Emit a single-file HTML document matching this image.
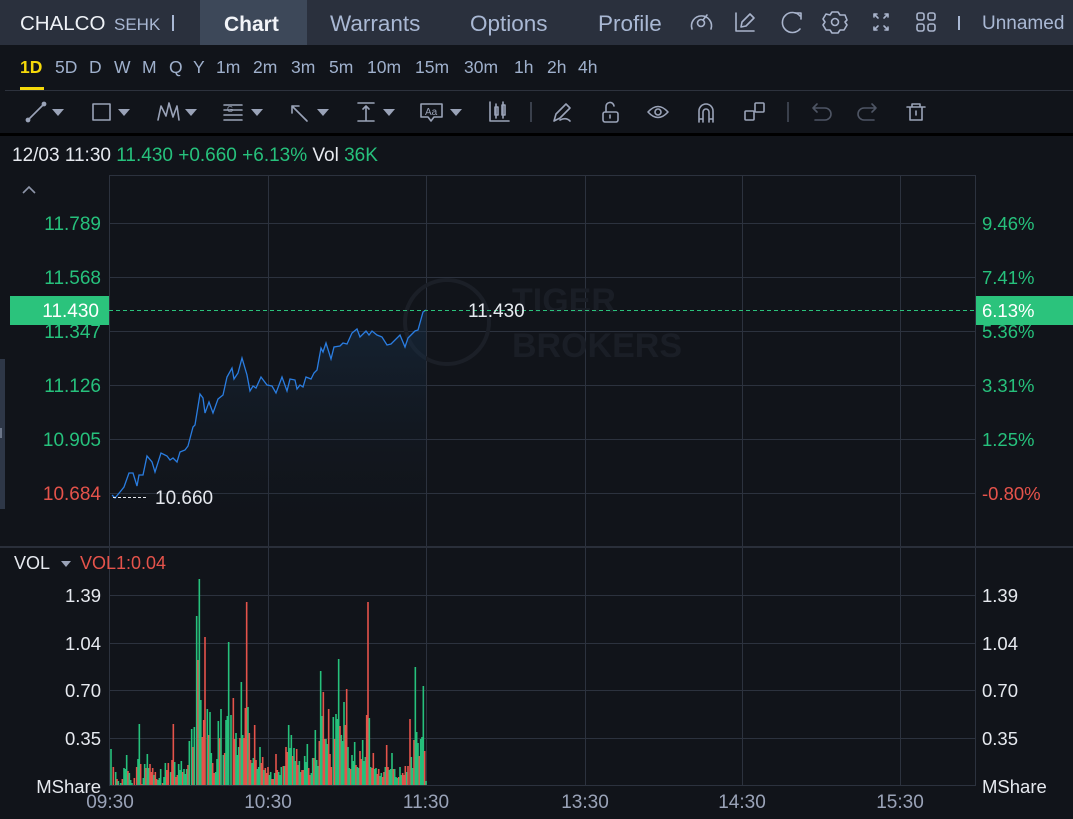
<!DOCTYPE html>
<html><head><meta charset="utf-8">
<style>
html,body{margin:0;padding:0;background:#11141a;width:1073px;height:819px;overflow:hidden;font-family:"Liberation Sans",sans-serif}
svg{display:block}
text{font-family:"Liberation Sans",sans-serif}
</style></head>
<body>
<svg width="1073" height="819" viewBox="0 0 1073 819" xmlns="http://www.w3.org/2000/svg">
<rect width="1073" height="819" fill="#11141a"/>
<!-- top bar -->
<rect x="0" y="0" width="1073" height="45" fill="#2a303d"/>
<rect x="200" y="0" width="107" height="45" fill="#3d4859"/>
<text x="20" y="30" font-size="20.5" fill="#eef1f6">CHALCO</text>
<text x="114" y="30" font-size="17" fill="#a9b8d4">SEHK</text>
<rect x="172" y="15" width="2" height="16" fill="#a9b8d4"/>
<text x="224" y="31" font-size="21" font-weight="bold" fill="#f2f4f8">Chart</text>
<text x="330" y="31" font-size="22.5" fill="#a9b8d4">Warrants</text>
<text x="470" y="31" font-size="22.5" fill="#a9b8d4">Options</text>
<text x="598" y="31" font-size="22.5" fill="#a9b8d4">Profile</text>
<g fill="none" stroke="#a9b4cc" stroke-width="1.6" stroke-linecap="round" stroke-linejoin="round">
 <path d="M692 29 A10 10 0 1 1 711 29"/><circle cx="701" cy="23" r="3.5"/><path d="M703 20 L707 15"/>
 <path d="M736 13 V31 H754"/><path d="M741 27 L742 22 L750 14 L754 18 L746 26 Z"/>
 <path d="M800 16 A10 10 0 1 0 800 29"/><path d="M795 13 H801 V19"/>
 <circle cx="835" cy="22" r="3.5"/><path d="M832 12 H838 L840 15 L845 15 L847 20 L845 22 L847 25 L844 30 L840 30 L838 33 H832 L830 30 L826 30 L823 25 L825 22 L823 19 L826 14 L830 15 Z"/>
 <path d="M874 14 L878 18 M874 14 V17 M874 14 H877 M888 14 L884 18 M888 14 V17 M888 14 H885 M874 30 L878 26 M874 30 V27 M874 30 H877 M888 30 L884 26 M888 30 V27 M888 30 H885"/>
 <rect x="917" y="13" width="7" height="7" rx="2"/><rect x="928" y="13" width="7" height="7" rx="2"/><rect x="917" y="24" width="7" height="7" rx="2"/><rect x="928" y="24" width="7" height="7" rx="2"/>
</g>
<rect x="958" y="16" width="2" height="14" fill="#a9b8d4"/>
<text x="982" y="29" font-size="19" fill="#a9b8d4">Unnamed</text>

<!-- timeframes -->
<g font-size="17.5" fill="#9fb0cc">
<text x="20" y="73" fill="#f5d90a" font-weight="bold">1D</text>
<text x="55" y="73">5D</text><text x="89" y="73">D</text><text x="114" y="73">W</text><text x="142" y="73">M</text><text x="169" y="73">Q</text><text x="193" y="73">Y</text>
<text x="216" y="73">1m</text><text x="253" y="73">2m</text><text x="291" y="73">3m</text><text x="329" y="73">5m</text><text x="367" y="73">10m</text><text x="415" y="73">15m</text><text x="464" y="73">30m</text><text x="514" y="73">1h</text><text x="547" y="73">2h</text><text x="578" y="73">4h</text>
</g>
<rect x="20" y="87" width="24" height="3" fill="#f5d90a"/>
<rect x="5" y="90" width="1068" height="1" fill="#2d323d"/>

<!-- toolbar -->
<g fill="none" stroke="#9aa3b8" stroke-width="1.6" stroke-linecap="round" stroke-linejoin="round">
 <path d="M28 120 L44 104"/><circle cx="28" cy="120" r="1.6" fill="#9aa3b8"/><circle cx="44" cy="104" r="1.6" fill="#9aa3b8"/>
 <rect x="93" y="104" width="17" height="16"/>
 <path d="M158 120 L161 106 L166 116 L169 103 L173 117 L177 106 L179 120"/>
 <path d="M224 105 H242 M224 110 H242 M224 115 H242 M224 120 H242"/>
 <path d="M307 121 L292 106 M292 106 V113 M292 106 H299"/>
 <path d="M358 103 H374 M358 121 H374 M366 106 V121 M363 109 L366 106 L369 109"/>
 <path d="M421 104 H442 V117 H434 L431 121 L428 117 H421 Z"/>
 <path d="M490 102 V121 H509"/><rect x="495" y="107" width="3" height="8"/><rect x="502" y="105" width="3" height="10"/><path d="M496 104V118 M503 102V118"/>
 <path d="M554 121 L556 114 L566 104 L570 108 L560 118 Z M560 120 Q566 117 570 121"/>
 <rect x="603" y="112" width="15" height="10" rx="2"/><path d="M606 112 V107 A4 4 0 0 1 614 106"/><path d="M610 115 V118"/>
 <path d="M648 112 Q658 101 668 112 Q658 123 648 112 Z"/><circle cx="658" cy="112" r="3"/>
 <path d="M699 122 V111 A7 7 0 0 1 713 111 V122 M703 122 V112 A3 3 0 0 1 709 112 V122 M699 119 H703 M709 119 H713"/>
 <rect x="745" y="111" width="9" height="9" rx="1"/><rect x="755" y="103" width="9" height="9" rx="1"/>
</g>
<g fill="#9aa3b8">
 <path d="M52 109 H64 L58 116 Z"/><path d="M118 109 H130 L124 116 Z"/><path d="M185 109 H197 L191 116 Z"/><path d="M251 109 H263 L257 116 Z"/><path d="M317 109 H329 L323 116 Z"/><path d="M383 109 H395 L389 116 Z"/><path d="M450 109 H462 L456 116 Z"/>
</g>
<text x="227" y="112" font-size="8" fill="#9aa3b8">G</text>
<text x="425" y="115" font-size="10" fill="#9aa3b8">Aa</text>
<rect x="530" y="102" width="2" height="20" fill="#3a404c"/>
<rect x="787" y="102" width="2" height="20" fill="#3a404c"/>
<g fill="none" stroke="#4e5564" stroke-width="1.6" stroke-linecap="round" stroke-linejoin="round">
 <path d="M813 108 H825 A6 6 0 0 1 825 120 H815 M813 108 L817 104 M813 108 L817 112"/>
 <path d="M876 108 H864 A6 6 0 0 0 864 120 H874 M876 108 L872 104 M876 108 L872 112"/>
</g>
<g fill="none" stroke="#9aa3b8" stroke-width="1.6" stroke-linecap="round" stroke-linejoin="round">
 <path d="M907 107 H925 M912 107 V104 H920 V107 M910 107 V120 H922 V107 M916 111 V115"/>
</g>
<rect x="0" y="133" width="1073" height="3" fill="#000"/>

<!-- info line -->
<text x="12" y="161" font-size="19"><tspan fill="#e6e9ef">12/03 11:30 </tspan><tspan fill="#26c17c">11.430 +0.660 +6.13% </tspan><tspan fill="#e6e9ef">Vol </tspan><tspan fill="#26c17c">36K</tspan></text>

<!-- left bar -->
<rect x="0" y="359" width="5" height="150" fill="#2e3747"/>
<rect x="0" y="428" width="2" height="10" fill="#6b7588"/>

<!-- chevron -->
<path d="M23 193 L29 187 L35 193" fill="none" stroke="#8e96aa" stroke-width="1.6"/>

<!-- grid -->
<g stroke="#2c323e" stroke-width="1">
 <path d="M109.5 175 V785 M975.5 175 V785 M109 175.5 H976"/>
 <path d="M268.5 175 V785 M426.5 175 V785 M585.5 175 V785 M742.5 175 V785 M900.5 175 V785"/>
 <path d="M109 223.5 H976 M109 277.5 H976 M109 331.5 H976 M109 385.5 H976 M109 439.5 H976 M109 493.5 H976"/>
 <path d="M109 595.5 H976 M109 643.5 H976 M109 690.5 H976 M109 738.5 H976 M109 785.5 H976"/>
</g>
<rect x="0" y="546" width="1073" height="2" fill="#2a2f3a"/>

<!-- watermark -->
<g>
<circle cx="447" cy="322" r="42" fill="none" stroke="#1b1f27" stroke-width="4"/>
<text x="512" y="312" font-size="34" font-weight="bold" fill="#1a1e26">TIGER</text>
<text x="512" y="357" font-size="34" font-weight="bold" fill="#1a1e26">BROKERS</text>
</g>

<!-- area + price line -->
<defs><linearGradient id="ag" x1="0" y1="0" x2="0" y2="1"><stop offset="0" stop-color="#1a3550" stop-opacity="0.5"/><stop offset="1" stop-color="#11141a" stop-opacity="0"/></linearGradient></defs>
<path id="area" fill="url(#ag)" d=""/>
<polyline id="pl" fill="none" stroke="#2a7de1" stroke-width="1.3" points="112,495 115,498 120,492 124,487 129,473 133,473 137,486 139,475 143,475 147,456 152,462 155,472 161,453 167,456 170,460 173,458 177,462 180,452 185,450 188,446 193,427 195,425 200,394 203,398 205,413 209,402 213,413 218,399 223,395 227,377 232,368 234,379 238,373 242,358 247,375 250,391 253,386 256,388 261,377 267,385 272,386 276,393 282,377 287,391 290,379 295,380 297,389 300,385 303,387 306,377 311,379 314,373 317,370 321,348 323,352 326,343 331,359 334,347 340,346 343,343 347,344 352,333 357,329 360,337 366,331 369,335 372,331 377,335 382,337 387,345 391,344 400,335 405,347 408,338 415,331 418,330 423,312 426,310"/>

<!-- current price dashed line -->
<path d="M109 310.5 H976" stroke="#2bc37c" stroke-width="1" stroke-dasharray="4,3"/>
<rect x="10" y="296" width="99" height="29" fill="#2bc37c"/>
<rect x="976" y="296" width="97" height="29" fill="#2bc37c"/>
<path d="M113 497.5 H148" stroke="#e6e9ef" stroke-width="1" stroke-dasharray="3,2"/>
<text x="468" y="317" font-size="19" fill="#e6e9ef">11.430</text>
<text x="155" y="504" font-size="19" fill="#e6e9ef">10.660</text>

<!-- left axis -->
<g font-size="19" text-anchor="end">
<text x="101" y="230" fill="#26c17c">11.789</text>
<text x="101" y="284" fill="#26c17c">11.568</text>
<text x="101" y="338" fill="#26c17c">11.347</text>
<text x="101" y="392" fill="#26c17c">11.126</text>
<text x="101" y="446" fill="#26c17c">10.905</text>
<text x="101" y="500" fill="#e5534b">10.684</text>
<text x="99" y="317" fill="#ffffff">11.430</text>
</g>
<g font-size="18.5">
<text x="982" y="230" fill="#26c17c">9.46%</text>
<text x="982" y="284" fill="#26c17c">7.41%</text>
<text x="982" y="338" fill="#26c17c">5.36%</text>
<text x="982" y="392" fill="#26c17c">3.31%</text>
<text x="982" y="446" fill="#26c17c">1.25%</text>
<text x="982" y="500" fill="#e5534b">-0.80%</text>
<text x="982" y="317" fill="#ffffff">6.13%</text>
</g>

<!-- volume -->
<text x="14" y="569" font-size="18" fill="#e6e9ef">VOL</text>
<path d="M61 561 H71 L66 567 Z" fill="#9aa3b8"/>
<text x="80" y="569" font-size="18" fill="#e5534b">VOL1:0.04</text>
<g font-size="18.5" fill="#e6e9ef">
<text x="101" y="602" text-anchor="end">1.39</text>
<text x="101" y="650" text-anchor="end">1.04</text>
<text x="101" y="697" text-anchor="end">0.70</text>
<text x="101" y="745" text-anchor="end">0.35</text>
<text x="101" y="793" text-anchor="end">MShare</text>
<text x="982" y="602">1.39</text>
<text x="982" y="650">1.04</text>
<text x="982" y="697">0.70</text>
<text x="982" y="745">0.35</text>
<text x="982" y="793">MShare</text>
</g>
<g id="bars"></g>
<g font-size="19" fill="#9aa3b8" text-anchor="middle">
<text x="110" y="808">09:30</text><text x="268" y="808">10:30</text><text x="426" y="808">11:30</text><text x="585" y="808">13:30</text><text x="742" y="808">14:30</text><text x="900" y="808">15:30</text>
</g>
</svg>
<script>
var d=[[333,36,'g'],[340,18,'r'],[347,13,'g'],[355,4,'g'],[362,2,'g'],[372,17,'g'],[380,30,'g'],[388,12,'g'],[396,2,'g'],[410,18,'r'],[418,61,'g'],[426,1,'r'],[434,21,'g'],[442,31,'g'],[450,21,'r'],[458,17,'r'],[466,13,'r'],[474,5,'g'],[482,16,'g'],[488,2,'r'],[496,22,'g'],[505,22,'r'],[512,13,'g'],[520,61,'r'],[528,8,'r'],[536,21,'g'],[544,24,'g'],[552,16,'g'],[560,16,'g'],[568,44,'g'],[575,56,'g'],[583,58,'g'],[590,169,'g'],[598,206,'g'],[607,48,'r'],[615,148,'r'],[622,76,'g'],[630,73,'g'],[638,22,'r'],[647,13,'g'],[655,64,'g'],[663,76,'g'],[670,30,'g'],[678,65,'g'],[686,143,'g'],[693,70,'g'],[700,87,'r'],[708,52,'g'],[716,38,'g'],[724,103,'g'],[732,47,'r'],[740,183,'r'],[748,52,'r'],[756,22,'g'],[764,60,'r'],[772,16,'g'],[780,38,'g'],[788,28,'r'],[796,17,'r'],[804,18,'r'],[812,13,'g'],[820,6,'r'],[828,31,'r'],[836,13,'g'],[844,18,'g'],[850,19,'r'],[858,38,'r'],[866,60,'g'],[874,50,'g'],[882,37,'g'],[890,36,'r'],[898,24,'g'],[906,15,'r'],[914,29,'g'],[922,41,'g'],[930,10,'r'],[938,27,'g'],[946,55,'g'],[954,19,'g'],[962,114,'g'],[970,93,'r'],[978,46,'g'],[986,76,'r'],[994,18,'r'],[1000,68,'g'],[1008,71,'g'],[1016,126,'g'],[1024,50,'g'],[1032,83,'g'],[1040,96,'r'],[1048,17,'g'],[1056,30,'g'],[1064,43,'g'],[1072,18,'g'],[1080,34,'r'],[1088,45,'g'],[1096,28,'g'],[1104,183,'r'],[1112,18,'g'],[1120,32,'r'],[1128,17,'g'],[1136,16,'r'],[1144,12,'g'],[1152,13,'r'],[1160,40,'r'],[1168,15,'g'],[1176,32,'g'],[1184,16,'g'],[1192,7,'g'],[1200,18,'g'],[1208,12,'r'],[1216,19,'r'],[1224,19,'r'],[1230,66,'r'],[1238,17,'g'],[1246,118,'g'],[1254,42,'g'],[1262,46,'g'],[1270,99,'g'],[1278,4,'g']];
var ns='http://www.w3.org/2000/svg',g=document.getElementById('bars');
var all=[];
for(var i=0;i<d.length;i++){all.push(d[i]);if(i<d.length-1){var a=d[i],b=d[i+1];var gap=(b[0]-a[0])/3;if(gap>=2.6){all.push([(a[0]+b[0])/2,Math.max(2,Math.round((a[1]+b[1])/3)),(i%2?'g':'r')]);}}}
all.forEach(function(p){var r=document.createElementNS(ns,'rect');var x=p[0]/3;r.setAttribute('x',(x-0.8).toFixed(2));r.setAttribute('width','1.6');r.setAttribute('y',785-p[1]);r.setAttribute('height',p[1]);r.setAttribute('fill',p[2]=='g'?'#26c17c':'#e5534b');g.appendChild(r);});
var pts=document.getElementById('pl').getAttribute('points');
document.getElementById('area').setAttribute('d','M'+pts.trim().split(/\s+/).join(' L')+' L426 546 L112 546 Z');
</script>
</body></html>
